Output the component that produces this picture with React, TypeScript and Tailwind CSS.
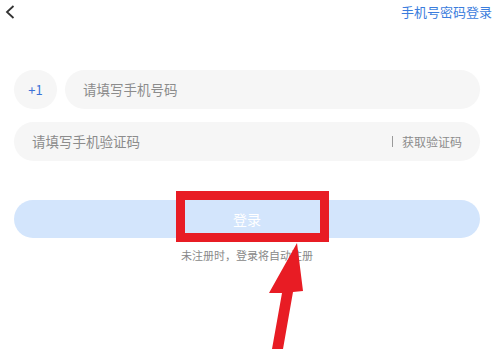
export default function App() {
  return (
    <div className="relative h-[349px] w-[501px] overflow-hidden bg-white font-['Noto_Sans_CJK_SC','Noto_Sans',sans-serif]">
      {/* header */}
      <div className="flex h-[26px] items-start justify-between">
        <svg className="ml-[5px] mt-[5px]" width="10" height="14" viewBox="0 0 10 14" fill="none">
          <path d="M8.5 1 L2 7 L8.5 13" stroke="#333" strokeWidth="1.8" />
        </svg>
        <span className="mr-[9px] mt-[3px] text-[13px] leading-[18px] text-[#3b7ddd]">手机号密码登录</span>
      </div>

      {/* form */}
      <div className="mt-[44px] flex flex-col pl-[14px] pr-[21px]">
        <div className="flex gap-[8px]">
          <div className="flex h-[39px] w-[43px] items-center justify-center rounded-full bg-[#f6f6f6] text-[13px] text-[#3c72d6]">
            +1
          </div>
          <div className="flex h-[39px] flex-1 items-center rounded-full bg-[#f6f6f6] pl-[18px] text-[13.5px] text-[#8c8c8c]">
            请填写手机号码
          </div>
        </div>

        <div className="mt-[13px] flex h-[39px] items-center justify-between rounded-full bg-[#f6f6f6] pl-[18px] pr-[18px]">
          <span className="text-[13.5px] text-[#8c8c8c]">请填写手机验证码</span>
          <div className="flex items-center gap-[9px]">
            <div className="h-[11px] w-px bg-[#9a9a9a]" />
            <span className="text-[12px] text-[#8c8c8c]">获取验证码</span>
          </div>
        </div>

        <div className="mt-[39px] flex h-[38px] items-center justify-center rounded-full bg-[#d3e5fc] text-[14px] text-white">
          登录
        </div>

        <div className="mt-[9px] text-center text-[11px] text-[#888]">未注册时，登录将自动注册</div>
      </div>

      {/* annotation */}
      <div className="absolute left-[176px] top-[191px] h-[51px] w-[153px] border-[9px] border-[#e81c24]" />
      <svg className="absolute left-0 top-0" width="501" height="349" viewBox="0 0 501 349">
        <polygon points="297,243 303,291 293,292 283,349 272,349 282,293 269,293" fill="#e81c24" />
      </svg>
    </div>
  );
}
